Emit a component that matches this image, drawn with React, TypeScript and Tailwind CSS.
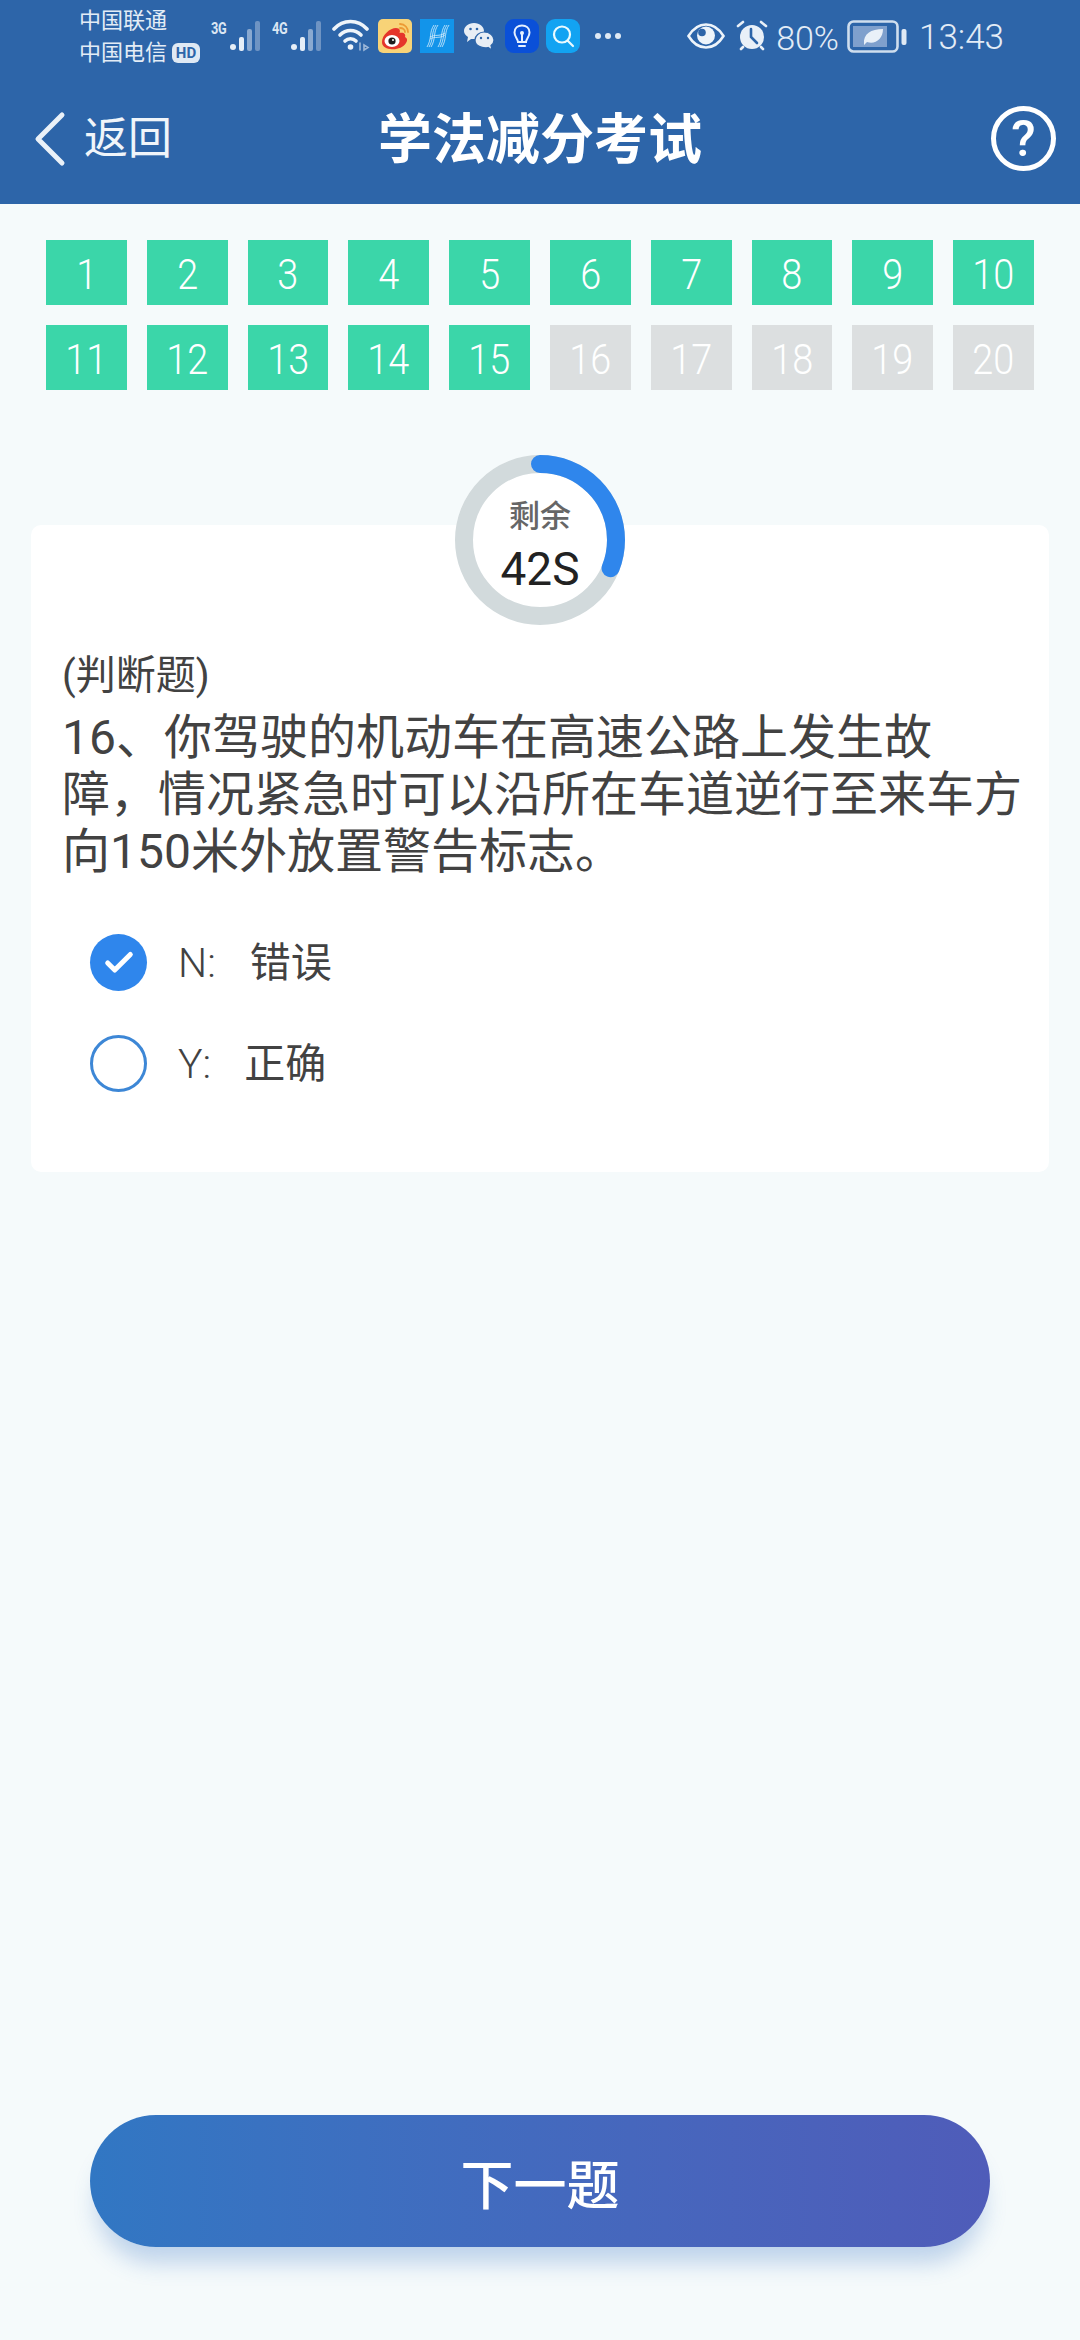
import { Check, ChevronLeft } from 'lucide-react';

const doneCount = 15;
const questionNumbers = Array.from({ length: 20 }, (_, i) => i + 1);

function Signal({ label }: { label: string }) {
  return (
    <div className="flex items-start">
      <span className="text-[17px] leading-[17px] font-bold text-[#dbe6f3] w-[17px] scale-x-75 origin-left tracking-tight">{label}</span>
      <svg width="34" height="32" viewBox="0 0 34 32">
        <circle cx="5" cy="27" r="3" fill="#e6eef7" />
        <rect x="11" y="17" width="5" height="14" rx="2" fill="#e6eef7" />
        <rect x="19" y="9" width="5" height="22" rx="2" fill="#8aa9d0" />
        <rect x="27" y="1" width="5" height="30" rx="2" fill="#6f94c3" />
      </svg>
    </div>
  );
}

function Wifi() {
  return (
    <svg width="38" height="33" viewBox="0 0 38 33" fill="none" stroke="#eef4fa" strokeWidth="3.6" strokeLinecap="round">
      <path d="M2 10 C11 0 26 0 35 10" />
      <path d="M8 16 C14 10 23 10 29 16" />
      <path d="M13 22 C16 19 21 19 24 22" />
      <circle cx="18.5" cy="28" r="2.8" fill="#eef4fa" stroke="none" />
      <path d="M28 24 v7 M32 26 l4 2.5 l-4 2.5 z" stroke="#9db7d8" strokeWidth="1.6" />
    </svg>
  );
}

function WeiboIcon() {
  return (
    <svg width="34" height="34" viewBox="0 0 34 34">
      <rect width="34" height="34" rx="5" fill="#f8d377" />
      <path d="M4 23 C4 16 12 9 18 9 C22 9 22.500 12 21.500 14 C26 13 28 15.500 27 18 C29 19 30 21 28 24 C25 29 18 31 12 30 C7 29.500 4 27 4 23 Z" fill="#e5352b" />
      <ellipse cx="14" cy="22" rx="7.500" ry="6" fill="#fff" />
      <circle cx="14" cy="22" r="3.600" fill="#1d1d1d" />
      <circle cx="15" cy="21" r="1" fill="#fff" />
      <path d="M22 5 C27 5 30 9 30 13 M22 9 C25 9 27 11 27 13" fill="none" stroke="#ec9a34" strokeWidth="1.800" strokeLinecap="round" />
    </svg>
  );
}

function HIcon() {
  return (
    <svg width="34" height="34" viewBox="0 0 34 34" fill="none" stroke="#d8effd" strokeWidth="0.8">
      <rect width="34" height="34" fill="#1294ea" stroke="none" />
      <path d="M7 28 C12 20 9 13 14 6 M9 28 C14 20 11 13 16 6 M11 28 C16 20 13 13 18 6" />
      <path d="M18 28 C23 20 20 13 25 6 M20 28 C25 20 22 13 27 6 M22 28 C27 20 24 13 29 6" />
      <path d="M10 18 C15 15 19 18 25 14 M10 20 C15 17 19 20 25 16" />
    </svg>
  );
}

function WechatIcon() {
  return (
    <svg width="32" height="29" viewBox="0 0 32 29">
      <path d="M11 1 C17 1 21 5 21 9 C21 14 17 17 11 17 L8 17 L4 20 L5 15 C2 13 1 11 1 9 C1 5 5 1 11 1 Z" fill="#e8eef5" />
      <circle cx="7.500" cy="7" r="1.300" fill="#2d65a9" />
      <circle cx="14" cy="7" r="1.300" fill="#2d65a9" />
      <path d="M21 10 C27 10 31 14 31 18 C31 20.500 30 22 28 23.500 L29 28 L25 25.500 C19 26.500 12 24 12 18 C12 14 16 10 21 10 Z" fill="#e8eef5" stroke="#2d65a9" strokeWidth="1.200" />
      <circle cx="18" cy="16" r="1.200" fill="#2d65a9" />
      <circle cx="25" cy="16" r="1.200" fill="#2d65a9" />
    </svg>
  );
}

function BulbIcon() {
  return (
    <svg width="34" height="34" viewBox="0 0 34 34" fill="none" stroke="#e6f0ff" strokeWidth="2" strokeLinecap="round">
      <rect width="34" height="34" rx="9" fill="#0a50d8" stroke="none" />
      <path d="M13 23 C13 20 9.500 18 9.500 13.500 C9.500 9 13 6.500 17 6.500 C21 6.500 24.500 9 24.500 13.500 C24.500 18 21 20 21 23 Z" />
      <path d="M14 27 L20 27 M17 23 L17 15" />
      <circle cx="17" cy="14" r="2" fill="#e6f0ff" stroke="none" />
    </svg>
  );
}

function SearchAppIcon() {
  return (
    <svg width="34" height="34" viewBox="0 0 34 34" fill="none" stroke="#eafaff" strokeWidth="2.200" strokeLinecap="round">
      <rect width="34" height="34" rx="9" fill="#12a3f2" stroke="none" />
      <circle cx="16" cy="15.500" r="8" />
      <path d="M21.500 21.500 L27 27" />
    </svg>
  );
}

function EyeIcon() {
  return (
    <svg width="38" height="26" viewBox="0 0 38 26">
      <path d="M1.500 13 C7 4 13 1.500 19 1.500 C25 1.500 31 4 36.500 13 C31 22 25 24.500 19 24.500 C13 24.500 7 22 1.500 13 Z" fill="none" stroke="#eef4fa" strokeWidth="2.600" />
      <circle cx="19" cy="12.500" r="9" fill="#eef4fa" />
      <circle cx="15" cy="9.500" r="3.800" fill="#2d65a9" />
    </svg>
  );
}

function AlarmIcon() {
  return (
    <svg width="32" height="32" viewBox="0 0 32 32" fill="none" strokeLinecap="round">
      <circle cx="16" cy="17" r="12" fill="#e9f0f8" />
      <path d="M15 9 L15 17 L21 23" stroke="#2d65a9" strokeWidth="2.600" />
      <path d="M2 6 L7 2 M30 6 L25 2 M5 29 L7 27 M27 29 L25 27" stroke="#e9f0f8" strokeWidth="2.600" />
    </svg>
  );
}

function BatteryIcon() {
  return (
    <svg width="60" height="33" viewBox="0 0 60 33">
      <rect x="1.500" y="1.500" width="49" height="30" rx="5" fill="none" stroke="#cfdeee" strokeWidth="2.600" />
      <rect x="6" y="6" width="34" height="21" fill="#7fa0cd" />
      <path d="M17 24 C16 14 24 9 36 9 C36 19 28 25 20 22 L17 25 Z" fill="#e9f0f8" />
      <rect x="54.500" y="9" width="5" height="16" rx="2" fill="#dfe9f4" />
    </svg>
  );
}

function StatusBar() {
  return (
    <div className="h-[70px] pl-[79px] pr-[76px] flex items-start text-[#e3ecf6]">
      <div className="w-[132px] pt-[5px] text-[22px] leading-[32px] shrink-0">
        <div className="whitespace-nowrap">中国联通</div>
        <div className="flex items-center whitespace-nowrap">
          中国电信
          <span className="ml-[5px] h-[20px] w-[28px] rounded-[6px] bg-[#dfe9f4] text-[#2d65a9] text-[15px] leading-[20px] font-bold text-center">HD</span>
        </div>
      </div>
      <div className="flex items-start pt-[20px]">
        <Signal label="3G" />
        <div className="w-[10px]" />
        <Signal label="4G" />
      </div>
      <div className="ml-[9px] pt-[19px] flex items-start gap-[8px]">
        <Wifi />
        <WeiboIcon />
      </div>
      <div className="ml-[8px] pt-[19px] flex items-start">
        <HIcon />
        <div className="ml-[9px] mt-[3px]"><WechatIcon /></div>
        <div className="ml-[10px]"><BulbIcon /></div>
        <div className="ml-[7px]"><SearchAppIcon /></div>
      </div>
      <div className="ml-[15px] pt-[33px] flex gap-[4px]">
        <span className="w-[6px] h-[6px] rounded-full bg-[#dfe9f4]" />
        <span className="w-[6px] h-[6px] rounded-full bg-[#dfe9f4]" />
        <span className="w-[6px] h-[6px] rounded-full bg-[#dfe9f4]" />
      </div>
      <div className="ml-auto pt-[20px] flex items-start">
        <div className="mt-[3px]"><EyeIcon /></div>
        <div className="ml-[11px]"><AlarmIcon /></div>
        <span className="ml-[8px] text-[34px] leading-[36px] font-light whitespace-nowrap">80%</span>
        <div className="ml-[8px]"><BatteryIcon /></div>
        <span className="ml-[12px] text-[35px] leading-[36px] font-light whitespace-nowrap">13:43</span>
      </div>
    </div>
  );
}

function CountdownRing() {
  return (
    <div className="relative z-10 mx-auto mt-[65px] w-[170px] h-[170px]">
      <svg width="170" height="170" viewBox="0 0 170 170" className="-rotate-90">
        <circle cx="85" cy="85" r="85" fill="#ffffff" />
        <circle cx="85" cy="85" r="76" fill="none" stroke="#d2dadc" strokeWidth="18" />
        <circle cx="85" cy="85" r="76" fill="none" stroke="#2f86ec" strokeWidth="18" strokeLinecap="round" strokeDasharray="148 478" />
      </svg>
      <div className="absolute inset-0 flex flex-col items-center">
        <span className="mt-[43px] text-[31px] leading-[38px] font-medium text-[#666666]">剩余</span>
        <span className="mt-[8px] text-[46px] leading-[50px] text-[#222222]">42S</span>
      </div>
    </div>
  );
}

function Option({ label, text, gap, checked }: { label: string; text: string; gap: string; checked?: boolean }) {
  return (
    <div className="h-[101px] flex items-center">
      {checked ? (
        <span className="w-[57px] h-[57px] rounded-full bg-[#2f86ec] flex items-center justify-center">
          <Check size={34} strokeWidth={3.5} className="text-white" />
        </span>
      ) : (
        <span className="w-[57px] h-[57px] rounded-full border-[3px] border-[#3d87d6] bg-white" />
      )}
      <span className="ml-[31px] text-[41px] leading-[50px] text-[#424242] font-light">{label}</span>
      <span className={`text-[41px] leading-[50px] text-[#424242] ${gap}`}>{text}</span>
    </div>
  );
}

export default function App() {
  return (
    <div className="w-full h-[2340px] flex flex-col bg-[#f5fafb] font-['Roboto','Noto_Sans_CJK_SC',sans-serif]">
      {/* top bar */}
      <header className="h-[204px] shrink-0 bg-[#2d65a9] text-white">
        <StatusBar />
        <div className="relative h-[134px] flex items-center">
          <ChevronLeft size={96} strokeWidth={1.250} className="absolute left-[2px] top-[21px] text-[#eaf1f8]" />
          <span className="ml-[84px] text-[44px] leading-[50px] mt-[4px] text-[#f0f5fa]">返回</span>
          <h1 className="absolute inset-x-0 top-[40px] text-center text-[54px] leading-[62px] font-bold">学法减分考试</h1>
          <span className="absolute left-[991px] top-[36px] w-[65px] h-[65px] rounded-full border-[5px] border-white flex items-center justify-center text-[50px] leading-none font-medium">?</span>
        </div>
      </header>

      {/* question progress */}
      <div className="mt-[36px] px-[46px] grid grid-cols-10 gap-x-[20px] gap-y-[20px]">
        {questionNumbers.map((n) => (
          <div
            key={n}
            className={`h-[65px] pt-[5px] flex items-center justify-center text-white text-[42px] font-light leading-none ${
              n <= doneCount ? 'bg-[#3bd6a9]' : 'bg-[#dcdfe0]'
            }`}
          >
            <span className="inline-block scale-x-90">{n}</span>
          </div>
        ))}
      </div>

      <CountdownRing />

      {/* question card */}
      <div className="mt-[-100px] mx-[31px] h-[647px] rounded-[10px] bg-white pl-[31px] pr-[20px] pt-[128px]">
        <p className="text-[40px] leading-[46px] text-[#424242]">(判断题)</p>
        <p className="mt-[10px] text-[48px] leading-[57px] text-[#424242]">
          16、你驾驶的机动车在高速公路上发生故<br />
          障，情况紧急时可以沿所在车道逆行至来车方<br />
          向150米外放置警告标志。
        </p>
        <div className="mt-[32px] pl-[28px]">
          <Option label="N:" text="错误" gap="ml-[34px]" checked />
          <Option label="Y:" text="正确" gap="ml-[33px]" />
        </div>
      </div>

      {/* next button */}
      <button className="mt-auto mb-[93px] mx-auto pt-[12px] w-[900px] h-[132px] rounded-full bg-gradient-to-r from-[#3177c3] to-[#4f5cb9] shadow-[0_22px_22px_-6px_rgba(49,110,195,0.28)] text-white text-[53px] font-medium leading-none">
        下一题
      </button>
    </div>
  );
}
